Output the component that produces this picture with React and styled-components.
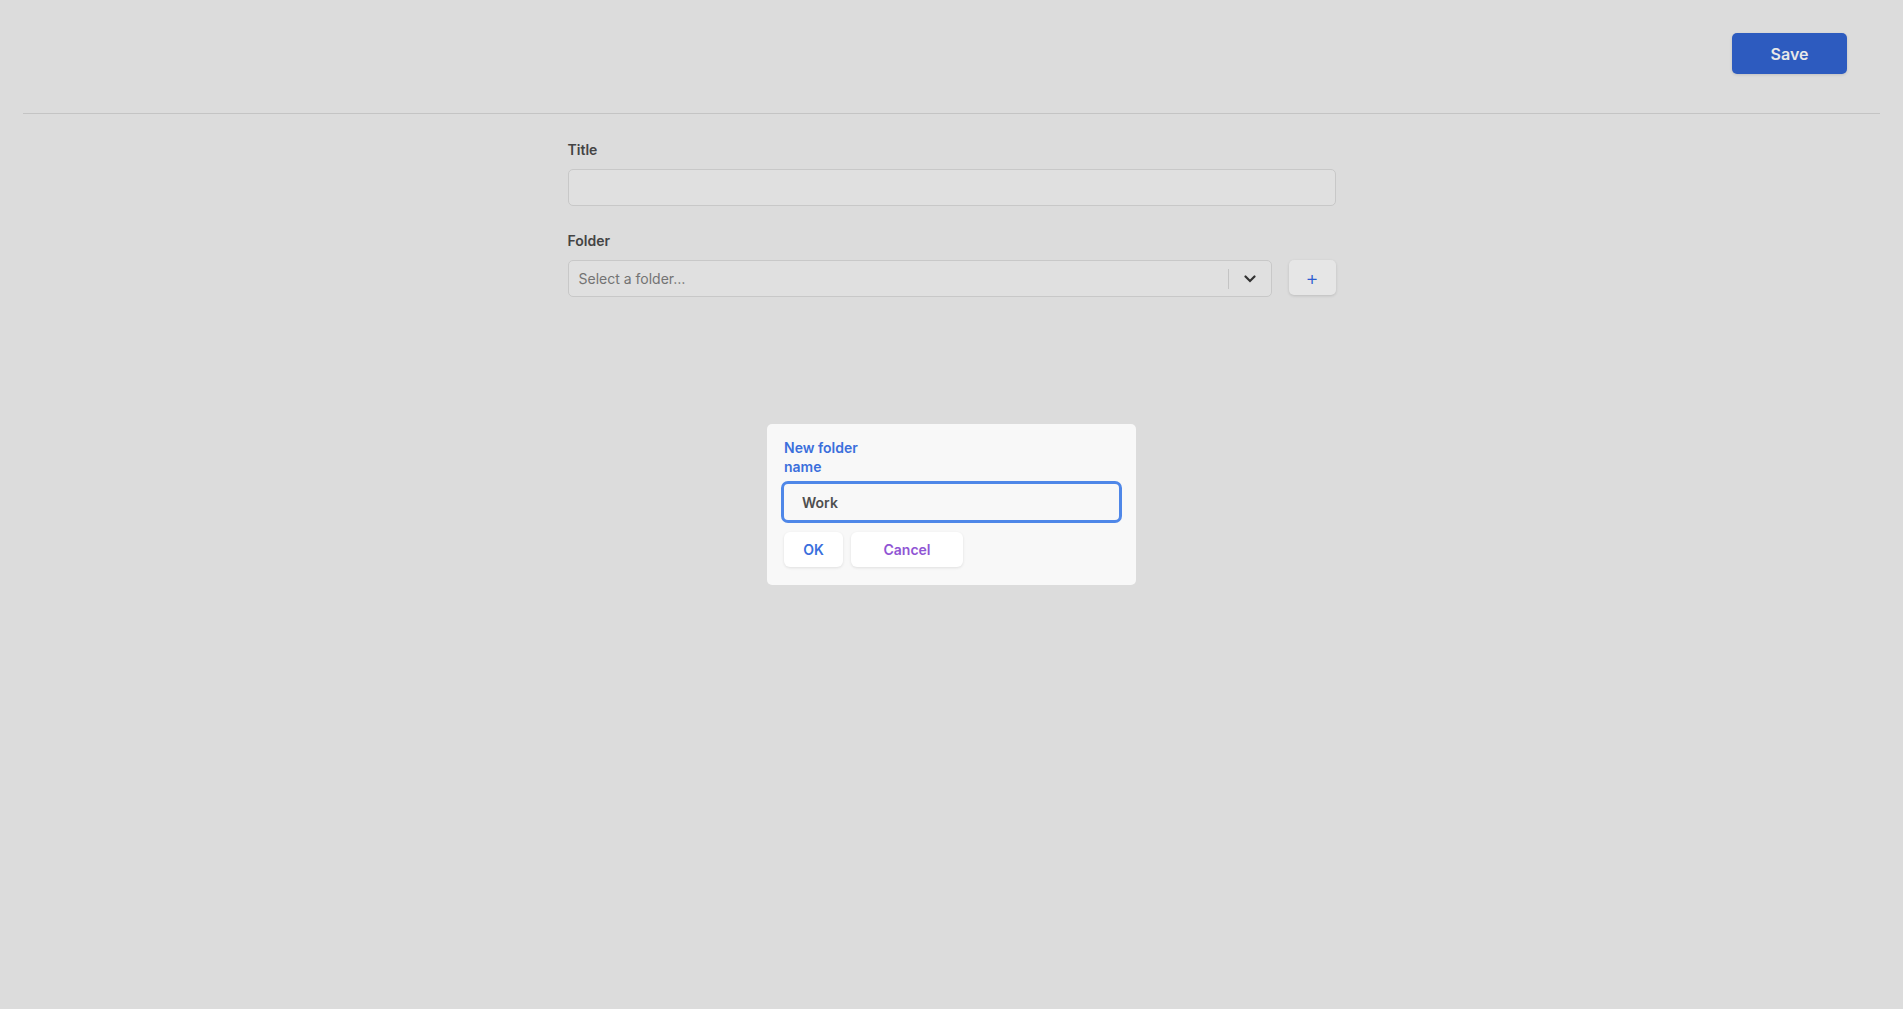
import React from "react";
import styled, { createGlobalStyle } from "styled-components";

const GlobalStyle = createGlobalStyle`
  body {
    margin: 0;
    background: #dcdcdc;
    font-family: Inter, "Liberation Sans", sans-serif;
    color: #444;
  }
`;

const Page = styled.div`
  min-height: 1009px;
  padding: 0 23px;
  box-sizing: border-box;
`;

const Header = styled.header`
  display: flex;
  justify-content: flex-end;
  padding: 33px 33px 39px;
  border-bottom: 1px solid #c4c4c4;
`;

const PrimaryButton = styled.button`
  width: 115px;
  height: 41px;
  border: none;
  border-radius: 5px;
  background: #2d5bbf;
  color: #e8e8e8;
  font: 600 16px Inter, "Liberation Sans", sans-serif;
  box-shadow: 0 1px 3px rgba(0, 0, 0, 0.12);
`;

const Form = styled.div`
  width: 768px;
  margin: 0 auto;
  padding-top: 27px;
  display: flex;
  flex-direction: column;
`;

const Label = styled.label`
  font-size: 14px;
  font-weight: 600;
  line-height: 17px;
  color: #444;
  margin-bottom: 11px;
  margin-top: ${(p) => (p.$first ? "0" : "26px")};
`;

const TextInput = styled.input`
  height: 37px;
  box-sizing: border-box;
  border: 1px solid #c8c8c8;
  border-radius: 5px;
  background: #e0e0e0;
  padding: 0 10px;
  font: 14px Inter, "Liberation Sans", sans-serif;
  outline: none;
`;

const SelectRow = styled.div`
  display: flex;
  align-items: flex-start;
  gap: 17px;
`;

const SelectBox = styled.div`
  flex: 1;
  height: 37px;
  box-sizing: border-box;
  border: 1px solid #c8c8c8;
  border-radius: 5px;
  background: #e0e0e0;
  display: flex;
  align-items: center;
  padding-left: 10px;
`;

const Placeholder = styled.span`
  flex: 1;
  font-size: 14px;
  color: #737373;
`;

const Separator = styled.span`
  width: 1px;
  height: 20px;
  background: #c4c4c4;
`;

const Chevron = styled.span`
  width: 42px;
  display: flex;
  justify-content: center;
  color: #333;
`;

const AddButton = styled.button`
  width: 47px;
  height: 35px;
  border: none;
  border-radius: 5px;
  background: #e6e6e6;
  color: #2e5bd0;
  font: 300 20px Inter, "Liberation Sans", sans-serif;
  box-shadow: 0 1px 3px rgba(0, 0, 0, 0.14);
  display: flex;
  align-items: center;
  justify-content: center;
`;

const Card = styled.div`
  width: 369px;
  box-sizing: border-box;
  margin: 127px auto 0;
  padding: 14px 17px 18px;
  background: #f8f8f8;
  border-radius: 5px;
`;

const CardTitle = styled.div`
  font-size: 14px;
  font-weight: 600;
  line-height: 19px;
  color: #3b6fdc;
`;

const FocusInput = styled.input`
  display: block;
  width: 100%;
  height: 36px;
  box-sizing: border-box;
  margin-top: 8px;
  border: none;
  border-radius: 4px;
  background: #f8f8f8;
  outline: 3px solid #4f87e8;
  padding: 0 18px;
  font: 600 14px Inter, "Liberation Sans", sans-serif;
  color: #4f4f4f;
`;

const Actions = styled.div`
  display: flex;
  gap: 8px;
  margin-top: 12px;
`;

const ActionButton = styled.button`
  min-width: ${(p) => p.$width}px;
  height: 35px;
  padding: 0 17px;
  border: none;
  border-radius: 6px;
  background: #fff;
  color: ${(p) => p.$color};
  font: 600 14px Inter, "Liberation Sans", sans-serif;
  box-shadow: 0 1px 3px rgba(0, 0, 0, 0.1);
`;

export default function App() {
  return (
    <>
      <GlobalStyle />
      <Page>
        <Header>
          <PrimaryButton>Save</PrimaryButton>
        </Header>
        <Form>
          <Label $first>Title</Label>
          <TextInput />
          <Label>Folder</Label>
          <SelectRow>
            <SelectBox>
              <Placeholder>Select a folder…</Placeholder>
              <Separator />
              <Chevron>
                <svg width="12" height="8" viewBox="0 0 12 8">
                  <path d="M1.5 1.5 6 6l4.5-4.5" fill="none" stroke="currentColor" strokeWidth="2.2" strokeLinecap="round" />
                </svg>
              </Chevron>
            </SelectBox>
            <AddButton>+</AddButton>
          </SelectRow>
        </Form>
        <Card>
          <CardTitle>New folder<br />name</CardTitle>
          <FocusInput defaultValue="Work" />
          <Actions>
            <ActionButton $color="#3a6fdd" $width={59}>OK</ActionButton>
            <ActionButton $color="#9055d4" $width={112}>Cancel</ActionButton>
          </Actions>
        </Card>
      </Page>
    </>
  );
}
